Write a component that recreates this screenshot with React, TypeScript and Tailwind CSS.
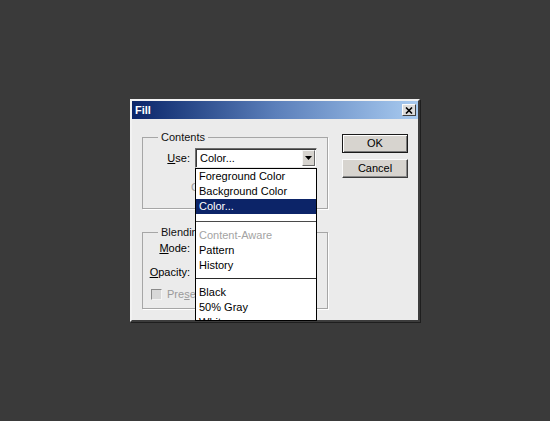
import { ReactNode } from "react";

const items1 = ["Foreground Color", "Background Color", "Color..."];
const items2 = ["Content-Aware", "Pattern", "History"];
const items3 = ["Black", "50% Gray", "White"];

export default function App() {
  return (
    <div className="h-[421px] w-[550px] overflow-hidden bg-[#3a3a3a] pl-[130px] pt-[99px] font-['Liberation_Sans',Arial,sans-serif] text-[11px] text-black">
      <div className="flex h-[223px] w-[290px] flex-col border-2 border-t-[#f2f2f2] border-l-[#f2f2f2] border-r-[#3c3c3c] border-b-[#3c3c3c] bg-[#ebebeb] shadow-[1px_1px_0_#1e1e1e]">
        <TitleBar />
        <div className="flex flex-1 pl-[10px] pr-[9px] pt-[12px]">
          <div className="flex w-[186px] flex-col">
            <Group title="Contents" className="h-[78px]">
              <div className="mt-[4px] flex items-center">
                <Label>
                  <u>U</u>se:
                </Label>
                <div className="relative z-10 ml-[5px]">
                  <Select value="Color..." />
                  <DropList />
                </div>
              </div>
              <div className="mt-[12px] h-[14px] pl-[48px] leading-[14px] text-[#9a9a9a]">Custom Pattern:</div>
            </Group>
            <Group title="Blending" className="mt-[17px] h-[83px]">
              <div className="flex h-[18px] items-center">
                <Label>
                  <u>M</u>ode:
                </Label>
                <div className="ml-[5px]">
                  <Select value="Normal" />
                </div>
              </div>
              <div className="mt-[6px] flex h-[18px] items-center">
                <Label>
                  <u>O</u>pacity:
                </Label>
                <div className="ml-[5px] h-[18px] w-[40px] border border-[#7f7f7f] bg-white pl-[3px] leading-[16px]">100</div>
                <span className="ml-[3px]">%</span>
              </div>
              <div className="mt-[7px] flex h-[13px] items-center pl-[8px] text-[#9a9a9a]">
                <span className="h-[11px] w-[11px] border border-t-[#8a8a8a] border-l-[#8a8a8a] border-r-[#f4f4f4] border-b-[#f4f4f4] bg-[#d8d8d8]" />
                <span className="ml-[5px] whitespace-nowrap">
                  Pre<u>s</u>erve Transparency
                </span>
              </div>
            </Group>
          </div>
          <div className="ml-[14px] flex flex-col pt-[3px]">
            <Button primary>OK</Button>
            <Button className="mt-[6px]">Cancel</Button>
          </div>
        </div>
      </div>
    </div>
  );
}

function TitleBar() {
  return (
    <div className="flex h-[18px] items-center justify-between bg-linear-to-r from-[#0b2569] via-[#5b7fba] to-[#a9cbf0] pl-[3px] pr-[2px]">
      <span className="text-[11px] font-bold text-white">Fill</span>
      <span className="flex h-[12px] w-[14px] items-center justify-center border border-t-[#fafafa] border-l-[#fafafa] border-r-[#404040] border-b-[#404040] bg-[#dcdcdc]">
        <svg width="8" height="7" viewBox="0 0 8 7">
          <path d="M1 0.5 L7 6.5 M7 0.5 L1 6.5" stroke="#000" strokeWidth="1.6" />
        </svg>
      </span>
    </div>
  );
}

function Group({ title, className, children }: { title: string; className?: string; children: ReactNode }) {
  return (
    <fieldset className={`border border-[#a6a6a6] shadow-[1px_1px_0_#ffffff] ${className ?? ""}`}>
      <legend className="ml-[15px] h-[13px] px-[3px] text-[11px] leading-[13px] text-[#111]">{title}</legend>
      {children}
    </fieldset>
  );
}

function Label({ children }: { children: ReactNode }) {
  return <span className="w-[47px] text-right whitespace-nowrap">{children}</span>;
}

function Select({ value }: { value: string }) {
  return (
    <div className="flex h-[20px] w-[122px] border border-t-[#6e6e6e] border-l-[#6e6e6e] border-r-[#e6e6e6] border-b-[#e6e6e6] bg-white p-[1px] shadow-[inset_1px_1px_0_#3a3a3a]">
      <span className="flex-1 pl-[3px] leading-[17px]">{value}</span>
      <span className="flex w-[13px] items-center justify-center border border-t-[#f6f6f6] border-l-[#f6f6f6] border-r-[#6a6a6a] border-b-[#6a6a6a] bg-[#d6d3ce]">
        <svg width="7" height="4" viewBox="0 0 7 4">
          <path d="M0 0 H7 L3.5 4 Z" fill="#000" />
        </svg>
      </span>
    </div>
  );
}

function DropList() {
  return (
    <div className="absolute left-0 top-[20px] h-[153px] w-[122px] overflow-hidden border border-black bg-white">
      {items1.map((t) => (
        <Item key={t} text={t} active={t === "Color..."} />
      ))}
      <div className="h-[7px]" />
      <div className="h-px bg-[#4a4a4a]" />
      <div className="h-[6px]" />
      {items2.map((t) => (
        <Item key={t} text={t} disabled={t === "Content-Aware"} />
      ))}
      <div className="h-[5px]" />
      <div className="h-px bg-[#2a2a2a]" />
      <div className="h-[6px]" />
      {items3.map((t) => (
        <Item key={t} text={t} />
      ))}
    </div>
  );
}

function Item({ text, active, disabled }: { text: string; active?: boolean; disabled?: boolean }) {
  return (
    <div
      className={`h-[15px] whitespace-nowrap pl-[3px] leading-[15px] ${
        active ? "bg-[#0c2468] text-white" : disabled ? "text-[#a3a3a3]" : "text-black"
      }`}
    >
      {text}
    </div>
  );
}

function Button({ children, primary, className }: { children: ReactNode; primary?: boolean; className?: string }) {
  return (
    <div
      className={`flex h-[19px] w-[66px] items-center justify-center bg-[#d7d4cf] ${
        primary
          ? "border border-[#1a1a1a] shadow-[inset_1px_1px_0_#ffffff,inset_-1px_-1px_0_#7a7a7a]"
          : "border border-t-[#fafafa] border-l-[#fafafa] border-r-[#3c3c3c] border-b-[#3c3c3c] shadow-[inset_-1px_-1px_0_#8a8a8a]"
      } ${className ?? ""}`}
    >
      {children}
    </div>
  );
}
